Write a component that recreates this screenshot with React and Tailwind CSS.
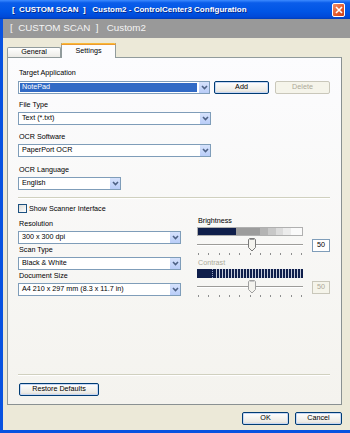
import React from "react";

function DropBtn() {
  return (
    <div className="w-[11px] h-full flex items-center justify-center bg-[linear-gradient(#D6E2FC,#B9CDF8)] border-l border-white">
      <svg width="7" height="5" viewBox="0 0 7 5">
        <polyline points="1,1 3.5,3.5 6,1" fill="none" stroke="#4D6185" strokeWidth="1.6" />
      </svg>
    </div>
  );
}

function Combo({ w, text, selected }) {
  return (
    <div className={"flex h-[13px] border border-[#7F9DB9] bg-white " + w}>
      <div className="flex-1 flex p-[1px]">
        <div className={selected ? "flex-1 flex items-center pl-[2px] bg-[#316AC5] text-white" : "flex-1 flex items-center pl-[2px]"}>
          {text}
        </div>
      </div>
      <DropBtn />
    </div>
  );
}

function Btn({ w, children, disabled }) {
  return (
    <div
      className={
        disabled
          ? "h-[13px] flex items-center justify-center rounded-[2px] border border-[#C9C7BA] bg-[#F5F4EA] text-[#ACA899] " + w
          : "h-[13px] flex items-center justify-center rounded-[2px] border border-[#003C74] bg-[linear-gradient(#FFFFFF,#ECEBE6_80%,#D6D0C5)] shadow-[inset_0_0_0_1px_#C6D7F5] " + w
      }
    >
      {children}
    </div>
  );
}

function Label({ children, gray }) {
  return <div className={gray ? "h-[10px] leading-[10px] pl-[1px] text-[#ACA899]" : "h-[10px] leading-[10px] pl-[1px]"}>{children}</div>;
}

function Ticks() {
  const xs = [];
  for (let i = 0; i <= 10; i++) xs.push(1 + i * 10.3);
  return (
    <svg width="106" height="4" className="block">
      {xs.map((x, i) => (
        <rect key={i} x={Math.round(x)} y="1" width="1" height="2" fill="#8E8F8F" />
      ))}
    </svg>
  );
}

function Slider({ disabled }) {
  return (
    <div className="flex items-center h-[14px]">
      <div className="relative w-[106px] h-[14px] flex items-center">
        <div className="w-full h-[2px] border-t border-[#9D9C99] border-b border-b-white bg-[#ECEBE6]" />
        <svg width="8" height="14" viewBox="0 0 8 14" className="absolute left-[51px] top-0">
          <polygon points="0.5,1.5 1.5,0.5 6.5,0.5 7.5,1.5 7.5,9.5 4,13 0.5,9.5" fill="#F4F3EE" stroke={disabled ? "#A0A0A0" : "#7A7A7A"} />
          <line x1="1.5" y1="1.5" x2="6.5" y2="1.5" stroke={disabled ? "#C8C8C8" : "#9A9A9A"} />
        </svg>
      </div>
      <div
        className={
          disabled
            ? "ml-[9px] w-[18px] h-[13px] border border-[#C9C7BA] bg-[#F5F4EA] text-[#ACA899] flex items-center justify-center"
            : "ml-[9px] w-[18px] h-[13px] border border-[#7F9DB9] bg-white flex items-center justify-center"
        }
      >
        50
      </div>
    </div>
  );
}

export default function App() {
  return (
    <div className="w-[350px] h-[433px] flex flex-col bg-[#ECE9D8] overflow-hidden font-['Liberation_Sans',Arial,sans-serif] text-[7.2px] text-black">
      {/* title bar */}
      <div className="h-[19px] shrink-0 flex items-center pl-[12px] bg-[linear-gradient(#3D8BFF,#0A5DEA_15%,#0055E5_60%,#0049D8_90%,#003DB8)]">
        <div className="text-white font-bold text-[8px] whitespace-pre [text-shadow:1px_1px_0_#0A2A8A]">
          {"[  CUSTOM SCAN  ]   Custom2 - ControlCenter3 Configuration"}
        </div>
        <div className="ml-auto mr-[5px] w-[13px] h-[14px] rounded-[2px] border border-white bg-[linear-gradient(135deg,#F0906A,#E2582A_60%,#C9401A)] flex items-center justify-center">
          <svg width="8" height="8" viewBox="0 0 8 8">
            <path d="M1 1 L7 7 M7 1 L1 7" stroke="white" strokeWidth="1.6" />
          </svg>
        </div>
      </div>
      {/* main */}
      <div className="flex-1 flex flex-col border-l-[3px] border-b-[3px] border-[#0852E0]">
        <div className="h-[19px] shrink-0 bg-[#999999] flex items-center pl-[7px] text-[#F4F4F4] text-[9.8px] whitespace-pre">
          {"[  CUSTOM SCAN  ]   Custom2"}
        </div>
        <div className="flex-1 flex flex-col pl-[4px]">
          {/* tabs */}
          <div className="mt-[5px] h-[14px] flex items-end">
            <div className="w-[54px] h-[10px] border border-b-0 border-[#919B9C] rounded-t-[2px] bg-[linear-gradient(#FFFFFF,#ECEBE6)] flex items-center justify-center">
              General
            </div>
            <div className="relative z-10 -mb-[1px] w-[55px] h-[15px] border-x border-[#919B9C] bg-[#FCFCFE] flex flex-col">
              <div className="h-[2px] -mx-[1px] rounded-t-[2px] bg-[linear-gradient(#FFC83C,#E68B2C)]" />
              <div className="flex-1 flex items-center justify-center pb-[1px]">Settings</div>
            </div>
          </div>
          {/* panel */}
          <div className="w-[335px] h-[348px] border border-[#919B9C] border-r-[#8A9192] border-b-[#8A9192] bg-[linear-gradient(#FCFCFE,#F4F3EE)] flex flex-col pl-[10px] pr-[11px]">
            <div className="mt-[10px]">
              <Label>Target Application</Label>
            </div>
            <div className="mt-[3px] flex items-center">
              <Combo w="w-[193px]" text="NotePad" selected />
              <div className="ml-[4px]">
                <Btn w="w-[55px]">Add</Btn>
              </div>
              <div className="ml-[6px]">
                <Btn w="w-[55px]" disabled>
                  Delete
                </Btn>
              </div>
            </div>
            <div className="mt-[6px]">
              <Label>File Type</Label>
            </div>
            <div className="mt-[2px]">
              <Combo w="w-[193px]" text="Text (*.txt)" />
            </div>
            <div className="mt-[7px]">
              <Label>OCR Software</Label>
            </div>
            <div className="mt-[2px]">
              <Combo w="w-[193px]" text="PaperPort OCR" />
            </div>
            <div className="mt-[8px]">
              <Label>OCR Language</Label>
            </div>
            <div className="mt-[2px]">
              <Combo w="w-[103px]" text="English" />
            </div>
            <div className="mt-[7px] h-[2px] border-t border-[#D0D0BF] border-b border-b-white" />
            <div className="mt-[5px] flex items-center h-[9px]">
              <div className="w-[9px] h-[9px] border border-[#1C5180] bg-[linear-gradient(135deg,#DCDCD7,#FFFFFF)]" />
              <div className="ml-[2px] leading-[9px]">Show Scanner Interface</div>
            </div>
            <div className="mt-[3px] flex">
              <div className="w-[163px] flex flex-col pt-[3px]">
                <Label>Resolution</Label>
                <div className="mt-[2px]">
                  <Combo w="w-[163px]" text="300 x 300 dpi" />
                </div>
                <div className="mt-[1px]">
                  <Label>Scan Type</Label>
                </div>
                <div className="mt-[2px]">
                  <Combo w="w-[163px]" text="Black & White" />
                </div>
                <div className="mt-[1px]">
                  <Label>Document Size</Label>
                </div>
                <div className="mt-[2px]">
                  <Combo w="w-[163px]" text="A4 210 x 297 mm (8.3 x 11.7 in)" />
                </div>
              </div>
              <div className="ml-[16px] flex flex-col">
                <Label>Brightness</Label>
                <div className="mt-[1px] w-[106px] h-[9px] flex border border-[#B0B0B0]">
                  <div className="w-[38px] bg-[#0F1E4B]" />
                  <div className="w-[24px] bg-[#9C9C9C]" />
                  <div className="w-[8px] bg-[#B4B4B4]" />
                  <div className="w-[8px] bg-[#C8C8C8]" />
                  <div className="w-[7px] bg-[#DCDCDC]" />
                  <div className="w-[8px] bg-[#ECECEC]" />
                  <div className="flex-1 bg-[#FAFAFA]" />
                </div>
                <div className="mt-[2px]">
                  <Slider />
                </div>
                <Ticks />
                <div className="mt-[2px]">
                  <Label gray>Contrast</Label>
                </div>
                <div className="mt-[1px] w-[106px] h-[9px] flex bg-[#0F1E4B]">
                  <div className="w-[15px]" />
                  <div className="w-[1px] bg-[repeating-linear-gradient(#9AA6C4_0_1px,#0F1E4B_1px_2px)]" />
                  <div className="flex-1 ml-[1px] bg-[repeating-linear-gradient(90deg,#0F1E4B_0_2px,#C6CCDA_2px_3px)]" />
                </div>
                <div className="mt-[2px]">
                  <Slider disabled />
                </div>
                <Ticks />
              </div>
            </div>
            <div className="mt-auto h-[2px] border-t border-[#D0D0BF] border-b border-b-white" />
            <div className="mt-[7px] mb-[8px] pl-[1px]">
              <Btn w="w-[80px]">Restore Defaults</Btn>
            </div>
          </div>
          {/* bottom buttons */}
          <div className="mt-[7px] w-[335px] flex justify-end gap-[6px]">
            <Btn w="w-[47px]">OK</Btn>
            <Btn w="w-[47px]">Cancel</Btn>
          </div>
        </div>
      </div>
    </div>
  );
}
